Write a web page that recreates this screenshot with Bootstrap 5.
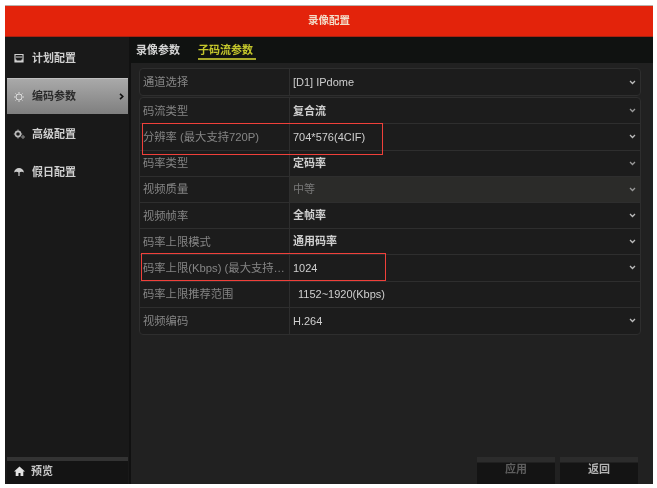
<!DOCTYPE html>
<html lang="zh">
<head>
<meta charset="utf-8">
<title>录像配置</title>
<link href="https://cdn.jsdelivr.net/npm/bootstrap@5.3.0/dist/css/bootstrap.min.css" rel="stylesheet">
<script src="https://cdn.jsdelivr.net/npm/bootstrap@5.3.0/dist/js/bootstrap.bundle.min.js"></script>
<style>
html,body{width:657px;height:488px;overflow:hidden;background:#fff;}
body{font-family:"Liberation Sans","Noto Sans CJK SC",sans-serif;font-size:11px;padding:5px 4px 4px 5px;}
.dvr{height:479px;width:648px;background:#212121;border-top:1px solid #b9b3ad;position:relative;filter:blur(.5px);}
.dvr-head{height:31px;background:#e3230b;color:#f3dcc8;font-size:10.5px;font-weight:700;border-bottom:1px solid #a82010;}
.dvr-body{height:447px;}
.dvr-side{width:126px;background:#191919;border-right:2px solid #111;padding:0 1px 0 2px;}
.side-item{height:38px;color:#cfcfcf;font-weight:700;padding-left:6px;gap:7px;}
.side-item svg{width:12px;height:12px;flex:none;}
.side-on{height:36px;margin:1px 0;background:linear-gradient(#a9a9a9,#7f7f7f);color:#2a2a2a;border-top:1px solid #c0c0c0;}
.side-first{margin-top:2px;}
.side-foot{height:27px;border-top:4px solid #333;background:#141414;color:#c4c4c4;font-weight:700;padding:0 0 3px 7px;gap:6px;}
.dvr-main{min-width:0;}
.tabbar{height:26px;background:#101211;padding-left:5px;gap:18px;}
.tabitem{color:#d4d4d4;font-weight:700;height:26px;padding-top:5px;}
.tab-on{color:#c4c62c;border-bottom:2px solid #a9a92a;height:23px;padding:5px 3px 0 0;}
.form-wrap{padding:5px 12px 0 8px;}
.grp{border:1px solid #2e2e2e;border-radius:4px;background:#1c1c1c;margin-bottom:1px;}
.rowline{height:26.2px;border-bottom:1px solid #2e2e2e;}
.rowline:last-child{border-bottom:0;}
.lbl{width:150px;flex:none;color:#858585;font-size:11.3px;padding:1px 0 0 3px;border-right:1px solid #2e2e2e;height:100%;white-space:nowrap;overflow:hidden;}
.val{flex:1;color:#cfcfcf;padding-left:3px;height:100%;padding-right:4px;}
.val-b{font-weight:700;}
.val-dim{color:#777;}
.row-dim{background:#2b2b29;}
.chev{width:7px;height:5px;flex:none;margin-left:auto;}
.mark-box{position:absolute;border:1px solid #f0403a;pointer-events:none;}
.mb1{left:137px;top:117px;width:241px;height:32px;}
.mb2{left:136px;top:247px;width:245px;height:28px;}
.foot-btn{width:78px;height:27px;padding-bottom:3px;background:linear-gradient(#2c2c2c 0,#2c2c2c 5px,#141414 6px,#141414);font-weight:700;font-size:11px;}
.foot-bar{padding-right:15px;gap:5px;margin-top:auto;}
.btn-off{color:#5e5e5e;}
.btn-live{color:#b4b4b4;}
</style>
</head>
<body>
<div class="dvr d-flex flex-column">
  <div class="dvr-head d-flex align-items-center justify-content-center">录像配置</div>
  <div class="dvr-body d-flex flex-grow-1">
    <div class="dvr-side d-flex flex-column">
      <div class="side-item side-first d-flex align-items-center">
        <svg viewBox="0 0 12 12"><path d="M2 2.500h8v7.500H2zM3 5h6M3 7.500v1.500h6V7.500" fill="none" stroke="#d0d0d0" stroke-width="1.200"/></svg>计划配置</div>
      <div class="side-item side-on d-flex align-items-center">
        <svg viewBox="0 0 12 12"><circle cx="6" cy="6" r="3" fill="none" stroke="#ddd" stroke-width="1"/><path d="M6 1v1.500M6 9.500V11M1 6h1.500M9.500 6H11M2.500 2.500l1 1M8.500 8.500l1 1M2.500 9.500l1-1M8.500 3.500l1-1" stroke="#ddd" stroke-width="1"/></svg>编码参数
        <svg class="ms-auto me-1" style="width:5px;height:7px" viewBox="0 0 5 7"><path d="M1 .8 3.800 3.500 1 6.200" fill="none" stroke="#111" stroke-width="1.600"/></svg></div>
      <div class="side-item d-flex align-items-center">
        <svg viewBox="0 0 12 12"><circle cx="5" cy="6" r="2.600" fill="none" stroke="#bbb" stroke-width="1.600"/><path d="M5 1.500v1.500M5 9v1.500M.8 6h1.500M7.700 6h1.500" stroke="#aaa" stroke-width="1"/><circle cx="10" cy="9" r="1.200" fill="none" stroke="#999" stroke-width="1"/></svg>高级配置</div>
      <div class="side-item d-flex align-items-center">
        <svg viewBox="0 0 12 12"><path d="M1 6.500C1.500 3.500 3.500 2 6 2s4.500 1.500 5 4.500C9.500 5.500 8 5.500 6 6.500 4 5.500 2.500 5.500 1 6.500z" fill="#ccc"/><path d="M6 6v4" stroke="#ccc" stroke-width="1.200"/></svg>假日配置</div>
      <div class="side-foot d-flex align-items-center mt-auto">
        <svg width="11" height="10" viewBox="0 0 11 10"><path d="M5.500 .5 11 5.500H9.300V10H6.500V7h-2v3H1.700V5.500H0z" fill="#e4e4e4"/></svg>预览</div>
    </div>
    <div class="dvr-main d-flex flex-column flex-grow-1">
      <div class="tabbar d-flex">
        <div class="tabitem">录像参数</div>
        <div class="tabitem tab-on">子码流参数</div>
      </div>
      <div class="form-wrap">
        <div class="grp">
          <div class="rowline d-flex align-items-center"><div class="lbl d-flex align-items-center">通道选择</div><div class="val d-flex align-items-center">[D1] IPdome<svg class="chev" viewBox="0 0 7 5"><path d="M1 1 3.500 3.500 6 1" fill="none" stroke="#bbb" stroke-width="1.300"/></svg></div></div>
        </div>
        <div class="grp">
          <div class="rowline d-flex align-items-center"><div class="lbl d-flex align-items-center">码流类型</div><div class="val val-b d-flex align-items-center">复合流<svg class="chev" viewBox="0 0 7 5"><path d="M1 1 3.500 3.500 6 1" fill="none" stroke="#999" stroke-width="1.300"/></svg></div></div>
          <div class="rowline d-flex align-items-center"><div class="lbl d-flex align-items-center">分辨率 (最大支持720P)</div><div class="val d-flex align-items-center">704*576(4CIF)<svg class="chev" viewBox="0 0 7 5"><path d="M1 1 3.500 3.500 6 1" fill="none" stroke="#bbb" stroke-width="1.300"/></svg></div></div>
          <div class="rowline d-flex align-items-center"><div class="lbl d-flex align-items-center">码率类型</div><div class="val val-b d-flex align-items-center">定码率<svg class="chev" viewBox="0 0 7 5"><path d="M1 1 3.500 3.500 6 1" fill="none" stroke="#999" stroke-width="1.300"/></svg></div></div>
          <div class="rowline d-flex align-items-center"><div class="lbl d-flex align-items-center">视频质量</div><div class="val val-dim row-dim d-flex align-items-center">中等<svg class="chev" viewBox="0 0 7 5"><path d="M1 1 3.500 3.500 6 1" fill="none" stroke="#999" stroke-width="1.300"/></svg></div></div>
          <div class="rowline d-flex align-items-center"><div class="lbl d-flex align-items-center">视频帧率</div><div class="val val-b d-flex align-items-center">全帧率<svg class="chev" viewBox="0 0 7 5"><path d="M1 1 3.500 3.500 6 1" fill="none" stroke="#bbb" stroke-width="1.300"/></svg></div></div>
          <div class="rowline d-flex align-items-center"><div class="lbl d-flex align-items-center">码率上限模式</div><div class="val val-b d-flex align-items-center">通用码率<svg class="chev" viewBox="0 0 7 5"><path d="M1 1 3.500 3.500 6 1" fill="none" stroke="#bbb" stroke-width="1.300"/></svg></div></div>
          <div class="rowline d-flex align-items-center"><div class="lbl d-flex align-items-center">码率上限(Kbps) (最大支持…</div><div class="val d-flex align-items-center">1024<svg class="chev" viewBox="0 0 7 5"><path d="M1 1 3.500 3.500 6 1" fill="none" stroke="#bbb" stroke-width="1.300"/></svg></div></div>
          <div class="rowline d-flex align-items-center"><div class="lbl d-flex align-items-center">码率上限推荐范围</div><div class="val d-flex align-items-center ps-2">1152~1920(Kbps)</div></div>
          <div class="rowline d-flex align-items-center"><div class="lbl d-flex align-items-center">视频编码</div><div class="val d-flex align-items-center">H.264<svg class="chev" viewBox="0 0 7 5"><path d="M1 1 3.500 3.500 6 1" fill="none" stroke="#bbb" stroke-width="1.300"/></svg></div></div>
        </div>
      </div>
      <div class="foot-bar d-flex justify-content-end">
        <div class="foot-btn btn-off d-flex align-items-center justify-content-center">应用</div>
        <div class="foot-btn btn-live d-flex align-items-center justify-content-center">返回</div>
      </div>
    </div>
  </div>
  <div class="mark-box mb1"></div>
  <div class="mark-box mb2"></div>
</div>
</body>
</html>
